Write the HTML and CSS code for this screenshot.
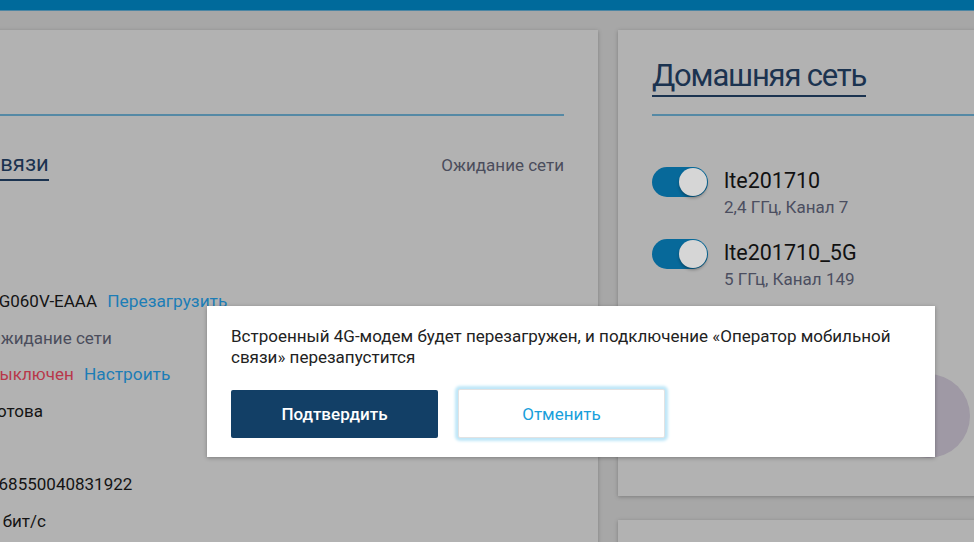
FILE: index.html
```html
<!DOCTYPE html>
<html lang="ru">
<head>
    <meta charset="UTF-8">
    <title>Главная</title>
    <link rel="stylesheet" href="styles.css">
</head>
<body>
<div class="topbar"></div>

<div class="layout">
    <section class="card card-wan">
        <h2 class="card-title">Интернет</h2>
        <div class="section-head">
            <span class="section-title">Оператор мобильной связи</span>
            <span class="status">Ожидание сети</span>
        </div>
        <ul class="info">
            <li><span class="label">Модем</span><span class="value">EG060V-EAAA <a class="link">Перезагрузить</a></span></li>
            <li><span class="label">Состояние</span><span class="value muted">Ожидание сети</span></li>
            <li><span class="label">PIN-код</span><span class="value"><span class="off">Выключен</span> <a class="link">Настроить</a></span></li>
            <li><span class="label">SIM-карта</span><span class="value">Готова</span></li>
            <li><span class="label">Оператор</span><span class="value"></span></li>
            <li><span class="label">IMEI</span><span class="value">868550040831922</span></li>
            <li><span class="label">Скорость</span><span class="value">0 бит/с</span></li>
        </ul>
    </section>

    <div class="side">
        <section class="card card-wifi">
            <h2 class="card-title"><span>Домашняя сеть</span></h2>
            <div class="wifi">
                <span class="toggle"></span>
                <div>
                    <div class="ssid">lte201710</div>
                    <div class="band">2,4 ГГц, Канал 7</div>
                </div>
            </div>
            <div class="wifi">
                <span class="toggle"></span>
                <div>
                    <div class="ssid">lte201710_5G</div>
                    <div class="band">5 ГГц, Канал 149</div>
                </div>
            </div>
            <div class="wps"></div>
        </section>
        <section class="card card-next"></section>
    </div>
</div>

<div class="dialog">
    <p>Встроенный 4G-модем будет перезагружен, и подключение «Оператор мобильной связи» перезапустится</p>
    <div class="dialog-buttons">
        <button class="btn btn-primary">Подтвердить</button>
        <button class="btn btn-cancel">Отменить</button>
    </div>
</div>
</body>
</html>
```

FILE: styles.css
```css
*{
    margin: 0;
    padding: 0;
    box-sizing: border-box;
}
body{
    width: 974px;
    height: 542px;
    overflow: hidden;
    position: relative;
    background: #a7a7a7;
    font-family: Roboto, "Noto Sans", sans-serif;
    color: #141414;
}
.topbar{
    height: 11px;
    background: #006a9b;
    border-bottom: 1px solid #4c86a4;
}
.layout{
    display: grid;
    grid-template-columns: 900px 400px;
    gap: 20px;
    margin: 19px 0 0 -302px;
}
.card{
    background: #b2b2b2;
    box-shadow: 0 1px 4px rgba(0,0,0,.25);
}
.card-title{
    height: 86px;
    padding-top: 28px;
    font-weight: normal;
    font-size: 31px;
    line-height: 36px;
    color: #1b3350;
    border-bottom: 2px solid #5589a5;
    letter-spacing: -1.2px;
}
.card-title span{
    border-bottom: 2px solid #1b3350;
    padding-bottom: 1px;
}

/* левая карточка */
.card-wan{
    padding: 0 34px;
    height: 560px;
}
.section-head{
    display: flex;
    justify-content: space-between;
    align-items: baseline;
    margin-top: 35px;
    padding-left: 31px;
}
.section-title{
    font-size: 22px;
    color: #1b3350;
    border-bottom: 2px solid #1b3350;
    padding-bottom: 3px;
}
.status{
    font-size: 17px;
    color: #4b4d5c;
}
.info{
    list-style: none;
    margin-top: 110px;
}
.info li{
    display: grid;
    grid-template-columns: 257px 1fr;
    height: 36.7px;
    font-size: 17px;
}
.label{
    color: #4b4d5c;
}
.muted{
    color: #4b4d5c;
}
.link{
    color: #1c7db6;
    margin-left: 6px;
    font-size: 17.3px;
}
.off{
    color: #b8374a;
}

/* правая колонка */
.side{
    display: flex;
    flex-direction: column;
    gap: 24px;
}
.card-wifi{
    padding: 0 34px;
    height: 466px;
}
.wifi{
    display: flex;
    gap: 16px;
    margin-top: 51px;
    height: 21px;
}
.wifi + .wifi{
    margin-top: 51px;
}
.toggle{
    position: relative;
    flex: none;
    width: 56px;
    height: 30px;
    border-radius: 15px;
    background: #07699a;
}
.toggle:after{
    content: "";
    position: absolute;
    right: 1px;
    top: 1px;
    width: 28px;
    height: 28px;
    border-radius: 50%;
    background: #d6d6d6;
    box-shadow: 0 2px 3px rgba(0,0,0,.3);
}
.ssid{
    font-size: 21.5px;
    line-height: 28px;
    color: #111;
}
.band{
    font-size: 17px;
    line-height: 24px;
    color: #4b4e60;
}
.wps{
    width: 84px;
    height: 84px;
    border-radius: 50%;
    background: #9f99a5;
    margin: 114px 0 0 234px;
}
.card-next{
    height: 60px;
}

/* диалог */
.dialog{
    position: absolute;
    left: 207px;
    top: 306px;
    width: 728px;
    height: 151px;
    background: #fff;
    box-shadow: 0 1px 4px rgba(0,0,0,.3);
    padding: 20px 24px 0;
}
.dialog p{
    font-size: 17px;
    line-height: 21px;
    color: #222;
}
.dialog-buttons{
    display: flex;
    gap: 20px;
    margin-top: 22px;
}
.btn{
    width: 207px;
    height: 48px;
    font-family: Roboto, "Noto Sans", sans-serif;
    font-size: 17px;
    border-radius: 2px;
    cursor: pointer;
}
.btn-primary{
    background: #123f66;
    color: #fff;
    border: none;
    font-weight: 500;
}
.btn-cancel{
    background: #fff;
    color: #1a9fdb;
    border: 1px solid #e2e2e2;
    box-shadow: 0 0 3px 3px #bfe7f8;
    height: 49px;
    margin-top: -1px;
}
```
